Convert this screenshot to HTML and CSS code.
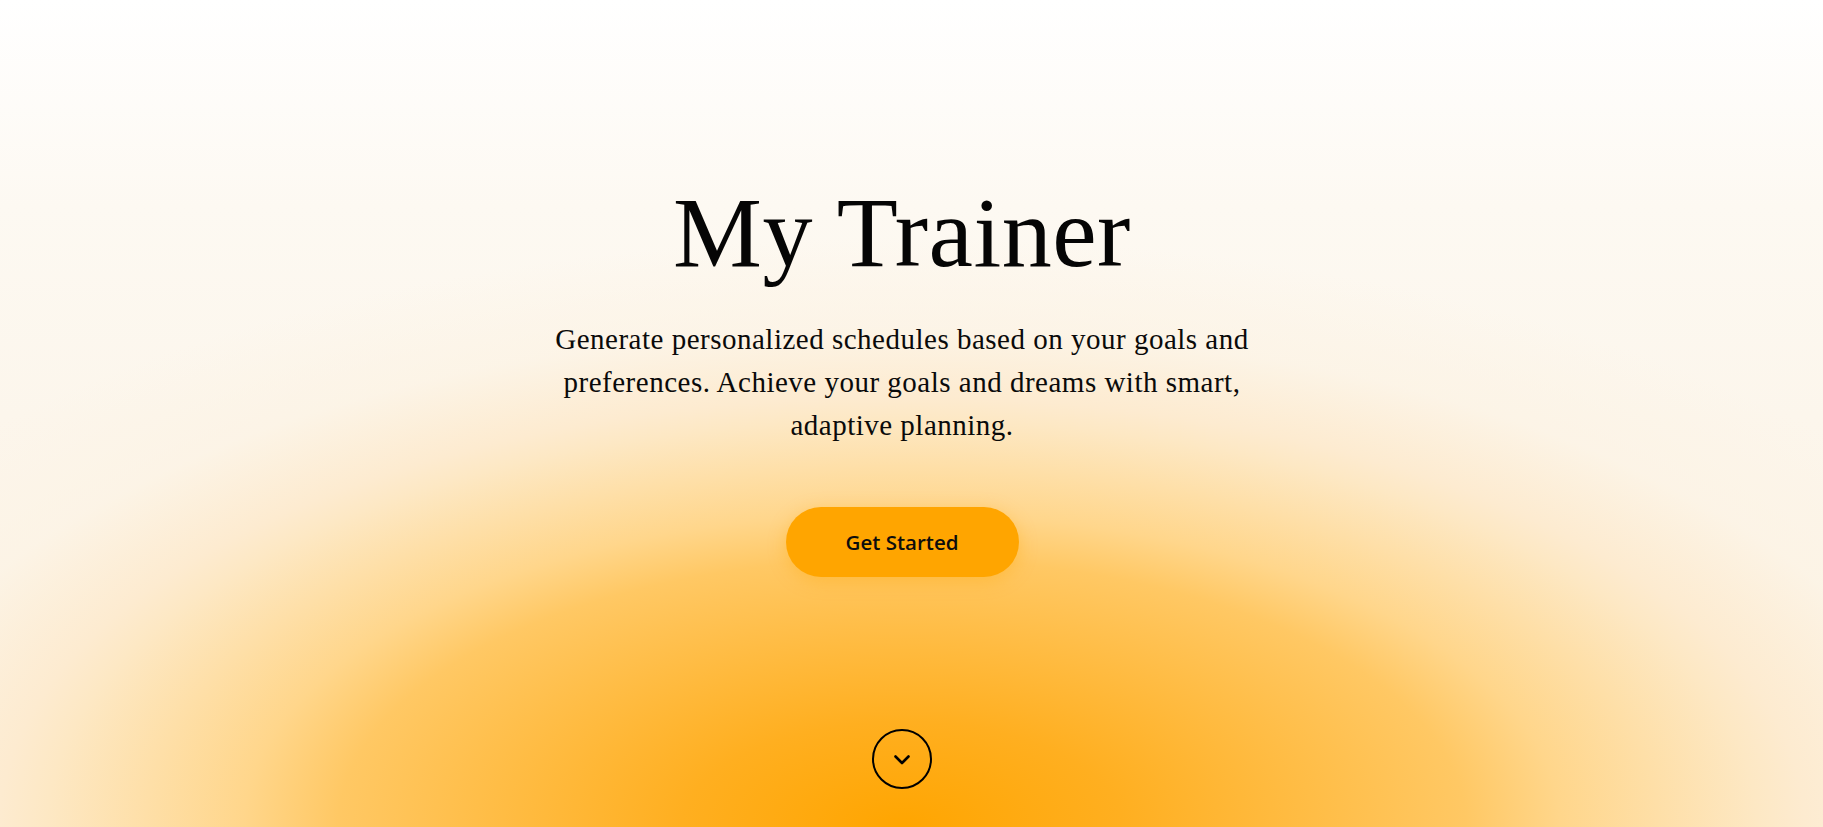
FILE: index.html
```html
<!DOCTYPE html>
<html lang="en">
<head>
<meta charset="utf-8">
<title>My Trainer</title>
<link rel="stylesheet" href="styles.css">
</head>
<body>
<main class="hero">
  <h1 class="hero-title">My Trainer</h1>
  <p class="hero-text">Generate personalized schedules based on your goals and preferences. Achieve your goals and dreams with smart, adaptive planning.</p>
  <a class="cta" href="#">Get Started</a>
  <a class="scroll-down" href="#" aria-label="Scroll down">
    <svg width="16" height="10" viewBox="0 0 16 10" aria-hidden="true">
      <polyline points="1.5,1.5 8,8 14.5,1.5" fill="none" stroke="#000" stroke-width="2.6" stroke-linecap="round" stroke-linejoin="round"/>
    </svg>
  </a>
</main>
</body>
</html>
```

FILE: styles.css
```css
* {
  box-sizing: border-box;
}

html, body {
  margin: 0;
  padding: 0;
  height: 100%;
}

body {
  overflow: hidden;
  background-color: #fdf7ee;
  background-image:
    radial-gradient(ellipse 1050px 500px at 902px 827px,
      #ffa500 0%,
      #ffaf20 21%,
      #ffc864 53.7%,
      #ffd68b 62.7%,
      #fde8c4 81.4%,
      #fdebd0 86%,
      rgba(252, 243, 228, 0.7) 100%,
      rgba(252, 243, 228, 0) 118%),
    linear-gradient(to bottom, #ffffff 0%, #fdf9f2 25%, #fcf6ec 50%, #fcf3e6 100%);
  font-family: "Liberation Serif", "Times New Roman", serif;
  color: #000;
}

.hero {
  min-height: 100vh;
  padding: 183px 19px 0 0;
  display: flex;
  flex-direction: column;
  align-items: center;
  text-align: center;
}

.hero-title {
  margin: 0;
  font-size: 100px;
  line-height: 1;
  font-weight: 400;
  color: #050505;
  letter-spacing: 0.5px;
}

.hero-text {
  margin: 35px 0 0;
  max-width: 720px;
  font-size: 29px;
  line-height: 43px;
  letter-spacing: 0.5px;
  color: #0a0a0a;
}

.cta {
  margin-top: 60px;
  display: flex;
  align-items: center;
  justify-content: center;
  width: 233px;
  height: 70px;
  border-radius: 35px;
  background: #ffa500;
  color: #0d0d0d;
  text-decoration: none;
  font-family: "Open Sans", "Noto Sans", sans-serif;
  font-weight: 600;
  font-size: 20.5px;
  box-shadow: 0 4px 18px rgba(255, 165, 0, 0.35);
}

.scroll-down {
  margin-top: 152px;
  width: 60px;
  height: 60px;
  border: 2px solid #000;
  border-radius: 50%;
  display: flex;
  align-items: center;
  justify-content: center;
  padding-top: 1px;
}

.scroll-down svg {
  display: block;
}
```
